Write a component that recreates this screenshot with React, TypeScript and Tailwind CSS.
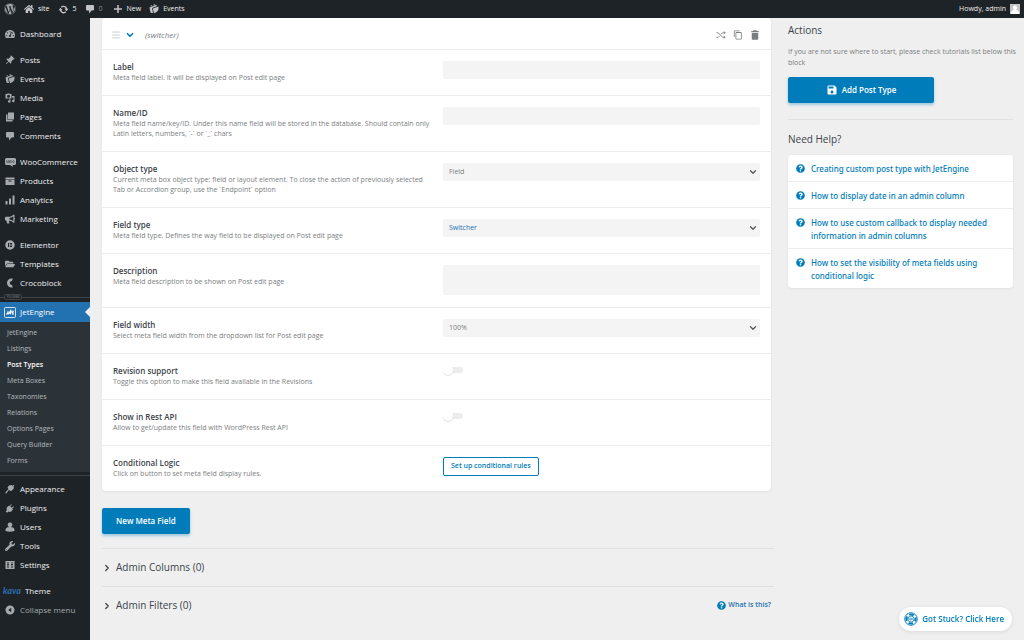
import type { ReactNode } from "react";
import { FaWordpress, FaTachometerAlt, FaHome, FaFolderOpen, FaQuestionCircle, FaWrench, FaPaintBrush, FaPlug, FaUser, FaBullhorn } from "react-icons/fa";
import { BsPinAngleFill } from "react-icons/bs";
import { MdContentCopy, MdSave } from "react-icons/md";
import { ChevronDown, ChevronRight, Menu } from "lucide-react";

type IconProps = { className?: string };

const svg = (children: ReactNode) =>
  function Icon({ className }: IconProps) {
    return (
      <svg viewBox="0 0 20 20" fill="currentColor" className={className} aria-hidden="true">
        {children}
      </svg>
    );
  };

const EventsIcon = svg(
  <>
    <path d="M1 7 L14 1.500 L16 4 L6 8 L8 18 L5 18 Q3 18 2.500 15 Z" />
    <path d="M7.500 9 L19 5 L19 10 Q18 16 10 18.500 Z" fillRule="evenodd" />
    <path d="M3 3 L5 2 L5.500 4 L3.500 5 Z M9 0.500 L11 0 L11.500 2 L9.500 3 Z" />
  </>
);
const MediaIcon = svg(
  <>
    <path fillRule="evenodd" d="M1 2h3l1-1h4l1 1h3v9H1V2zm6 1.500a3 3 0 100 6 3 3 0 000-6z" />
    <path d="M14 6h5v10a2.500 2.500 0 11-2-2.450V9h-3zM11 12v5a2.500 2.500 0 11-2-2.450V12z" />
  </>
);
const PagesIcon = svg(
  <>
    <path d="M6 1h12v14H6z" />
    <path d="M2 5h3v11h10v3H2z" />
  </>
);
const CommentIcon = svg(<path d="M4 2h12q2 0 2 2v7q0 2-2 2h-3l-5 6v-6H4q-2 0-2-2V4q0-2 2-2z" />);
const ArchiveIcon = svg(<path fillRule="evenodd" d="M1 3h18v3H1V3zm0 4h18v11H1V7zm6 2v2h6V9H7z" />);
const ChartIcon = svg(<path d="M1 12h4v7H1zM8 7h4v12H8zM15 1h4v18h-4z" />);
const ElementorIcon = svg(
  <path fillRule="evenodd" d="M10 0.500a9.500 9.500 0 110 19 9.500 9.500 0 010-19zM6 6v8h2V6H6zm3.500 0v2H14V6H9.500zm0 3v2H14V9H9.500zm0 3v2H14v-2H9.500z" />
);
const CrocoIcon = svg(<path d="M15.500 1H13A9 9 0 1013 19h2.500L14 14Q9.500 14 9.500 10T14 6z" />);
const UpdateIcon = svg(
  <path d="M10 3a7 7 0 016.800 5.500H19l-3.600 4.500-3.600-4.500h2.300a4.500 4.500 0 00-7.400-1.700L5 5A7 7 0 0110 3zM4.600 7l3.600 4.500H5.900a4.500 4.500 0 007.400 1.700L15 15A7 7 0 013.200 11.500H1z" />
);
const PlusIcon = svg(<path d="M8.500 2h3v6.500H18v3h-6.500V18h-3v-6.500H2v-3h6.500z" />);
const BrushIcon = svg(<path d="M8 3l5-1 1.500 1.500L19 1l-2 4.500L18 8l-4 5-3.500 1L8 11.500l-5 7q-1.500 1-2-.5T2 15.500L7 10 5 7z" />);
const PlugIcon = svg(<path d="M12 2l1.500 1.500-3 3 3 3 3-3L18 8l-3.500 3 1.500 1.500-3 4q-3 2.500-6 .5L4 19.500 1.500 17 4 14q-2-3 .5-6l4-3L10 6z" />);
const PersonIcon = svg(<path d="M10 1a4.500 4.500 0 013 8l-1 1.500h3q4 1 4 5V18q-9 2.500-18 0v-2.500q0-4 4-5h3L7 9a4.500 4.500 0 013-8z" />);
const SettingsIcon = svg(
  <path
    fillRule="evenodd"
    d="M1 2h18v16H1V2zm4 2v5H4v2h4V9H7V4H5zm0 8v4h2v-4H5zm8-8v3h2V4h-2zm-1 4v2h4V8h-4zm1 3v5h2v-5h-2z"
  />
);
const CollapseIcon = svg(<path fillRule="evenodd" d="M10 1a9 9 0 110 18 9 9 0 010-18zm2.500 4.500L6.500 10l6 4.500v-9z" />);
const TrashIcon = svg(<path d="M7 0.500h6l1 1.500h3.500v2.500h-15V2H6zM3.500 6h13v11.500q0 2-2 2h-9q-2 0-2-2z" />);

function ShuffleIcon() {
  return (
    <svg viewBox="0 0 20 16" className="h-2 w-[10px]" fill="none" stroke="currentColor" strokeWidth="1.800" aria-hidden="true">
      <path d="M1 3.500h3.500L13 12.500h5M1 12.500h3.500L7 10M10 6.500l3-3h5M15.500 0.800L18.500 3.500l-3 2.700M15.500 9.800l3 2.700-3 2.700" />
    </svg>
  );
}

function LifebuoyIcon() {
  return (
    <svg viewBox="0 0 28 28" className="size-[14px]" fill="none" stroke="currentColor" aria-hidden="true">
      <circle cx="14" cy="14" r="12.500" strokeWidth="2" />
      <circle cx="14" cy="14" r="9" strokeWidth="4" strokeDasharray="9.140 5" strokeDashoffset="4.570" />
      <circle cx="14" cy="14" r="6" strokeWidth="1.500" />
      <path d="M10.500 12.500h7M10.500 15.500h7" strokeWidth="1.500" />
    </svg>
  );
}

function WooIcon() {
  return (
    <svg viewBox="0 0 22 20" className="h-[10px] w-[11px]" aria-hidden="true">
      <path d="M3 2h16q3 0 3 3v8q0 3-3 3h-4l1 4-6-4H3q-3 0-3-3V5q0-3 3-3z" fill="#a7aaad" />
      <path d="M3 6l1 6 3-5 1 5 2-6M13 7.500a1.500 2 0 100 3.500 1.500 2 0 000-3.500M18 7.500a1.500 2 0 100 3.500 1.500 2 0 000-3.500" stroke="#50575e" strokeWidth="1.500" fill="none" />
    </svg>
  );
}

function JetIcon() {
  return (
    <svg viewBox="0 0 24 22" className="h-[11px] w-3" aria-hidden="true">
      <rect x="1" y="1" width="22" height="20" rx="2" fill="none" stroke="#fff" strokeWidth="1.600" />
      <path d="M4 14h1.500q2.500 0 2.500-5.500M8.500 14.500L13 8v6.500M10 12.500h4M14 8.500h6M15 11.200h4M20 14h-4" fill="none" stroke="#fff" strokeWidth="2.400" />
    </svg>
  );
}

const menuGroups = [
  [{ label: "Dashboard", icon: FaTachometerAlt }],
  [
    { label: "Posts", icon: BsPinAngleFill },
    { label: "Events", icon: EventsIcon },
    { label: "Media", icon: MediaIcon },
    { label: "Pages", icon: PagesIcon },
    { label: "Comments", icon: CommentIcon },
  ],
  [
    { label: "WooCommerce", icon: WooIcon },
    { label: "Products", icon: ArchiveIcon },
    { label: "Analytics", icon: ChartIcon },
    { label: "Marketing", icon: FaBullhorn },
  ],
  [
    { label: "Elementor", icon: ElementorIcon },
    { label: "Templates", icon: FaFolderOpen },
    { label: "Crocoblock", icon: CrocoIcon },
  ],
];

const bottomMenu = [
  { label: "Appearance", icon: BrushIcon },
  { label: "Plugins", icon: PlugIcon },
  { label: "Users", icon: PersonIcon },
  { label: "Tools", icon: FaWrench },
  { label: "Settings", icon: SettingsIcon },
];

const submenu = [
  "JetEngine",
  "Listings",
  "Post Types",
  "Meta Boxes",
  "Taxonomies",
  "Relations",
  "Options Pages",
  "Query Builder",
  "Forms",
];

const tutorials = [
  "Creating custom post type with JetEngine",
  "How to display date in an admin column",
  "How to use custom callback to display needed information in admin columns",
  "How to set the visibility of meta fields using conditional logic",
];

type MenuItem = { label: string; icon: (props: IconProps) => ReactNode };

function MenuList({ items }: { items: MenuItem[] }) {
  return (
    <ul>
      {items.map(({ label, icon: Icon }) => (
        <li key={label}>
          <a href="#" className="flex h-[19px] items-center text-[#f0f0f1]">
            <span className="flex w-5 justify-center text-[#a7aaad]">
              <Icon className="size-[10px]" />
            </span>
            {label}
          </a>
        </li>
      ))}
    </ul>
  );
}

function AdminBar() {
  return (
    <header className="flex h-[18px] items-center bg-[#1d2327] pr-1 text-[7px] text-[#f0f0f1]">
      <a href="#" aria-label="WordPress" className="flex w-5 justify-center text-[#a7aaad]">
        <FaWordpress className="size-3" />
      </a>
      <a href="#" className="ml-1 flex items-center gap-1">
        <FaHome className="size-[10px] text-[#c3c4c7]" />
        site
      </a>
      <a href="#" className="ml-2 flex items-center gap-1">
        <UpdateIcon className="size-[11px] text-[#c3c4c7]" />5
      </a>
      <a href="#" className="ml-2 flex items-center gap-1 text-[#8c8f94]">
        <CommentIcon className="size-[10px] text-[#c3c4c7]" />0
      </a>
      <a href="#" className="ml-2.5 flex items-center gap-1">
        <PlusIcon className="size-[10px] text-[#c3c4c7]" />
        New
      </a>
      <a href="#" className="ml-2 flex items-center gap-1">
        <EventsIcon className="size-[10px] text-[#c3c4c7]" />
        Events
      </a>
      <a href="#" className="ml-auto flex items-center gap-1">
        Howdy, admin
        <svg viewBox="0 0 20 20" className="size-[10px]" aria-hidden="true">
          <path d="M0 0h20v20H0z" fill="#c3c4c7" />
          <path d="M10 3a4 4.500 0 012 8.500q6 1 6 8.500H2q0-7.500 6-8.500A4 4.500 0 0110 3z" fill="#fff" />
        </svg>
      </a>
    </header>
  );
}

function Sidebar() {
  return (
    <nav className="w-[90px] shrink-0 bg-[#1d2327] pt-1.5 text-[8px]">
      <div className="flex flex-col gap-[7px]">
        {menuGroups.map((items) => (
          <MenuList key={items[0].label} items={items} />
        ))}
      </div>
      <div className="flex h-[10px] items-center text-[3px] leading-[4px] text-[#8c8f94]">
        <span className="h-px w-1 bg-[#3c434a]" />
        <span className="rounded-xs border border-[#3c434a] px-0.5">PLUGINS</span>
        <span className="h-px flex-1 bg-[#3c434a]" />
      </div>
      <a href="#" className="relative flex h-5 items-center bg-[#2271b1] text-white">
        <span className="flex w-5 justify-center">
          <JetIcon />
        </span>
        JetEngine
        <span className="absolute right-0 border-y-5 border-r-5 border-y-transparent border-r-[#f0f0f1]" />
      </a>
      <ul className="bg-[#2c3338] py-[3px] text-[7px]">
        {submenu.map((label) => (
          <li key={label}>
            <a
              href="#"
              className={
                label === "Post Types"
                  ? "flex h-4 items-center pl-[7px] font-semibold text-white"
                  : "flex h-4 items-center pl-[7px] text-[#b4b9be]"
              }
            >
              {label}
            </a>
          </li>
        ))}
      </ul>
      <hr className="my-[3px] border-[#3c434a]" />
      <MenuList items={bottomMenu} />
      <a href="#" className="mt-[7px] flex h-[19px] items-center gap-1 pl-[3px] text-[#f0f0f1]">
        <span className="font-['Lato'] text-[9px] font-bold text-[#2e6bb5] italic">kava</span>
        Theme
      </a>
      <button type="button" className="flex h-[19px] items-center text-[#a7aaad]">
        <span className="flex w-5 justify-center">
          <CollapseIcon className="size-[10px]" />
        </span>
        Collapse menu
      </button>
    </nav>
  );
}

type FieldProps = { id: string; title: string; description: string; children: ReactNode };

function Field({ id, title, description, children }: FieldProps) {
  return (
    <div className="grid grid-cols-2 gap-[13px] border-b border-[#ececec] px-[11px] pt-[11px] pb-3 last:border-b-0">
      <div>
        <label htmlFor={id} className="block text-[8px] leading-3 font-semibold text-[#3c434a]">
          {title}
        </label>
        <p className="text-[7px] leading-[10px] text-[#7b7e81]">{description}</p>
      </div>
      <div className="flex items-start">{children}</div>
    </div>
  );
}

function SelectBox({ id, options, active }: { id: string; options: string[]; active?: boolean }) {
  return (
    <div className="relative w-full">
      <select
        id={id}
        className={
          active
            ? "block h-[18px] w-full appearance-none rounded-xs bg-[#f4f4f4] px-1.5 text-[7px] text-[#2271b1]"
            : "block h-[18px] w-full appearance-none rounded-xs bg-[#f4f4f4] px-1.5 text-[7px] text-[#7b7e81]"
        }
      >
        {options.map((option) => (
          <option key={option}>{option}</option>
        ))}
      </select>
      <ChevronDown className="pointer-events-none absolute top-1 right-0.5 size-[10px] text-[#50575e]" strokeWidth={3} />
    </div>
  );
}

function Switcher({ id }: { id: string }) {
  return (
    <input
      id={id}
      type="checkbox"
      className="relative my-0.5 h-1.5 w-5 appearance-none rounded-full bg-[#ececec] before:absolute before:-top-0.5 before:left-0 before:size-[10px] before:rounded-full before:bg-white before:shadow-[0_1px_1px_rgba(0,0,0,0.12)]"
    />
  );
}

function MetaFieldCard() {
  return (
    <section className="mr-[3px] rounded-sm bg-white shadow-[0_1px_3px_rgba(35,40,45,0.07)]">
      <div className="flex h-8 items-center border-b border-[#ececec] px-[11px] pt-0.5 text-[#7b7e81]">
        <Menu className="-ml-0.5 size-[10px] text-[#c3c4c7]" />
        <button type="button" aria-label="Collapse field" className="ml-1 text-[#007cba]">
          <ChevronDown className="size-[10px]" strokeWidth={4} />
        </button>
        <span className="ml-2.5 text-[8px] italic">(switcher)</span>
        <div className="ml-auto flex items-center gap-[7px]">
          <button type="button" aria-label="Randomize">
            <ShuffleIcon />
          </button>
          <button type="button" aria-label="Copy">
            <MdContentCopy className="size-[10px]" />
          </button>
          <button type="button" aria-label="Delete">
            <TrashIcon className="size-[10px]" />
          </button>
        </div>
      </div>
      <Field id="label" title="Label" description="Meta field label. It will be displayed on Post edit page">
        <input id="label" type="text" className="h-[18px] w-full rounded-xs bg-[#f4f4f4] px-1.5 text-[7px]" />
      </Field>
      <Field
        id="name"
        title="Name/ID"
        description="Meta field name/key/ID. Under this name field will be stored in the database. Should contain only Latin letters, numbers, `-` or `_` chars"
      >
        <input id="name" type="text" className="h-[18px] w-full rounded-xs bg-[#f4f4f4] px-1.5 text-[7px]" />
      </Field>
      <Field
        id="object-type"
        title="Object type"
        description="Current meta box object type: field or layout element. To close the action of previously selected Tab or Accordion group, use the `Endpoint` option"
      >
        <SelectBox id="object-type" options={["Field"]} />
      </Field>
      <Field
        id="field-type"
        title="Field type"
        description="Meta field type. Defines the way field to be displayed on Post edit page"
      >
        <SelectBox id="field-type" options={["Switcher"]} active />
      </Field>
      <Field id="description" title="Description" description="Meta field description to be shown on Post edit page">
        <textarea id="description" className="block h-[30px] w-full resize-none rounded-xs bg-[#f4f4f4] px-1.5 text-[7px]" />
      </Field>
      <Field
        id="field-width"
        title="Field width"
        description="Select meta field width from the dropdown list for Post edit page"
      >
        <SelectBox id="field-width" options={["100%"]} />
      </Field>
      <Field
        id="revision"
        title="Revision support"
        description="Toggle this option to make this field available in the Revisions"
      >
        <Switcher id="revision" />
      </Field>
      <Field
        id="rest-api"
        title="Show in Rest API"
        description="Allow to get/update this field with WordPress Rest API"
      >
        <Switcher id="rest-api" />
      </Field>
      <Field
        id="conditions"
        title="Conditional Logic"
        description="Click on button to set meta field display rules."
      >
        <button
          id="conditions"
          type="button"
          className="h-[19px] rounded-xs border border-[#007cba] px-[7px] text-[7px] font-semibold text-[#007cba]"
        >
          Set up conditional rules
        </button>
      </Field>
    </section>
  );
}

function Section({ title, help }: { title: string; help?: string }) {
  return (
    <div className="flex h-[38px] items-center border-t border-[#e0e0e0] pr-[3px] text-[#3c434a]">
      <button type="button" className="flex items-center gap-1 text-[10px] font-medium">
        <ChevronRight className="size-[10px]" strokeWidth={3} />
        {title}
      </button>
      {help && (
        <a href="#" className="ml-auto flex items-center gap-0.5 text-[7px] font-semibold text-[#2271b1]">
          <FaQuestionCircle className="size-[9px] text-[#007cba]" />
          {help}
        </a>
      )}
    </div>
  );
}

function ActionsPanel() {
  return (
    <aside className="w-[225px] shrink-0 pt-1.5">
      <h2 className="text-[10px] leading-3 font-medium text-[#3c434a]">Actions</h2>
      <p className="mt-2.5 -mr-2 text-[7px] leading-[11px] text-[#7b7e81]">
        If you are not sure where to start, please check tutorials list below this block
      </p>
      <button
        type="button"
        className="mt-[9px] flex h-[26px] w-[146px] items-center justify-center gap-1 rounded-xs bg-[#007cba] text-[8px] font-semibold text-white shadow-[0_2px_3px_rgba(0,124,186,0.35)]"
      >
        <MdSave className="size-3" />
        Add Post Type
      </button>
      <hr className="mt-4 border-[#e0e0e0]" />
      <h2 className="mt-3 text-[10px] leading-[14px] font-medium text-[#3c434a]">Need Help?</h2>
      <ul className="mt-[9px] rounded-sm bg-white font-['Noto_Sans',sans-serif] shadow-[0_1px_3px_rgba(35,40,45,0.07)]">
        {tutorials.map((title) => (
          <li key={title} className="border-b border-[#ececec] last:border-b-0">
            <a href="#" className="flex gap-1.5 px-2 pt-[7px] pb-1.5 text-[8px] leading-[13px] font-medium text-[#007cba]">
              <FaQuestionCircle className="mt-0.5 size-[9px] shrink-0" />
              {title}
            </a>
          </li>
        ))}
      </ul>
    </aside>
  );
}

export default function App() {
  return (
    <div className="flex min-h-screen flex-col bg-[#efefef] font-['Open_Sans','Noto_Sans',sans-serif]">
      <AdminBar />
      <div className="flex flex-1">
        <Sidebar />
        <div className="flex min-w-0 flex-1 items-start gap-[14px] pr-[11px] pl-3">
          <main className="min-w-0 flex-1">
            <MetaFieldCard />
            <button
              type="button"
              className="mt-[17px] mb-[14px] block h-[26px] rounded-xs bg-[#007cba] px-[14px] text-[8px] font-semibold text-white shadow-[0_2px_3px_rgba(0,124,186,0.35)]"
            >
              New Meta Field
            </button>
            <Section title="Admin Columns (0)" />
            <Section title="Admin Filters (0)" help="What is this?" />
          </main>
          <ActionsPanel />
        </div>
      </div>
      <button
        type="button"
        className="fixed right-3 bottom-[9px] flex h-6 items-center gap-1 rounded-full bg-white px-[5px] pr-2 text-[8px] font-semibold text-[#007cba] shadow-[0_1px_4px_rgba(35,40,45,0.1)]"
      >
        <LifebuoyIcon />
        Got Stuck? Click Here
      </button>
    </div>
  );
}
